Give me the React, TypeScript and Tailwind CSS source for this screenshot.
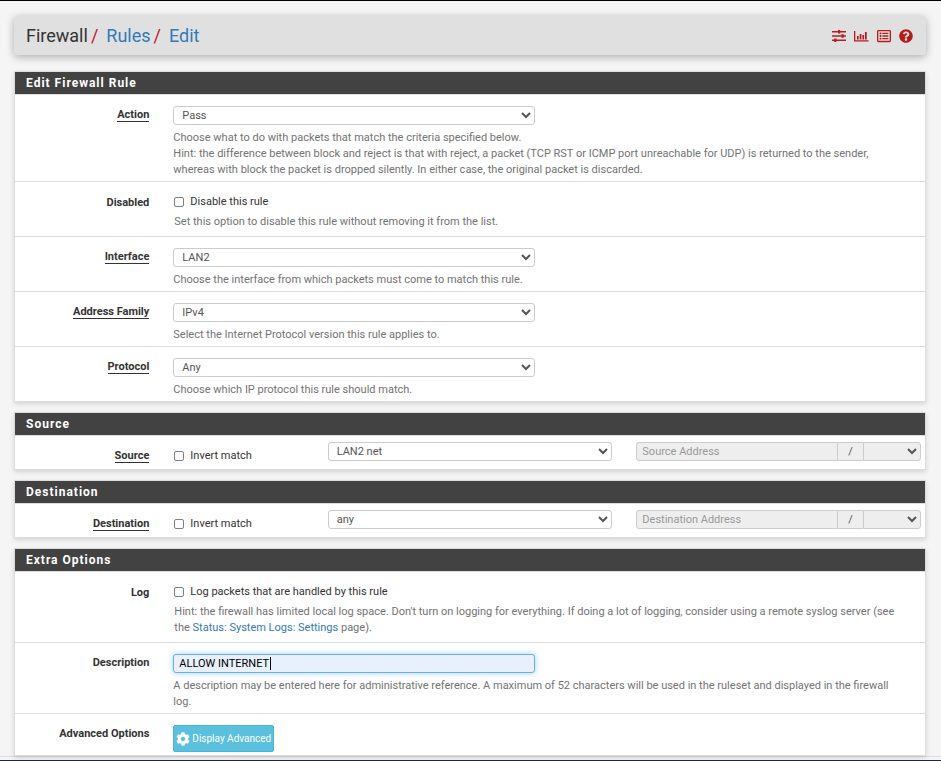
import type { ReactNode } from "react";
import { FaCog, FaQuestionCircle, FaRegListAlt } from "react-icons/fa";

const selectClass =
  "block h-[19px] w-full rounded-[3px] border border-[#ccc] bg-white px-1 text-[11px] text-[#555] disabled:bg-[#eee] disabled:opacity-100";

function Panel({ title, children }: { title: string; children: ReactNode }) {
  return (
    <section className="border border-[#ddd] bg-white shadow-[0_2px_5px_rgba(0,0,0,0.14)]">
      <h2 className="h-[23px] border-b border-[#ddd] bg-[#424242] pl-[11px] text-[12px] leading-[22px] font-bold tracking-[1px] text-white">
        {title}
      </h2>
      <div className="divide-y divide-[#ddd] overflow-x-clip">{children}</div>
    </section>
  );
}

function RowLabel({ id, underline, children }: { id: string; underline?: boolean; children: string }) {
  return (
    <div className="col-span-2 flex items-start justify-end px-3 pt-[2px] font-bold">
      <label htmlFor={id} className={underline ? "border-b border-[#333] leading-[13px]" : "leading-[13px]"}>
        {children}
      </label>
    </div>
  );
}

function SelectRow({ id, label, value, children }: { id: string; label: string; value: string; children: ReactNode }) {
  return (
    <div className="-mx-2 grid grid-cols-12 pt-[11px] pb-[3px]">
      <RowLabel id={id} underline>{label}</RowLabel>
      <div className="col-span-10 grid grid-cols-10">
        <div className="col-span-5 px-3">
          <select id={id} className={selectClass}>
            <option>{value}</option>
          </select>
        </div>
        <p className="col-span-10 mt-[5px] pr-7 pl-3 leading-4 text-[#737373]">{children}</p>
      </div>
    </div>
  );
}

function Check({ id, children }: { id: string; children: string }) {
  return (
    <label className="flex h-4 items-center gap-[6px] pl-px leading-4">
      <input id={id} type="checkbox" className="size-[10px] appearance-none rounded-[2px] border border-[#808080] bg-white" />
      {children}
    </label>
  );
}

function CheckRow({ id, label, text, children }: { id: string; label: string; text: string; children: ReactNode }) {
  return (
    <div className="-mx-2 grid grid-cols-12 pt-3 pb-[6px]">
      <RowLabel id={id}>{label}</RowLabel>
      <div className="col-span-10 pr-7 pl-3">
        <Check id={id}>{text}</Check>
        <p className="mt-1 pl-px leading-4 text-[#737373]">{children}</p>
      </div>
    </div>
  );
}

function AddressRow({ name, value }: { name: string; value: string }) {
  return (
    <div className="-mx-2 grid grid-cols-12 pt-[6px] pb-[5px]">
      <div className="col-span-2 pt-[5px]">
        <RowLabel id={name} underline>{name}</RowLabel>
      </div>
      <div className="col-span-2 px-3 pt-[6px]">
        <Check id={name}>Invert match</Check>
      </div>
      <div className="col-span-4 px-3">
        <select aria-label={name + " type"} className={selectClass}>
          <option>{value}</option>
        </select>
      </div>
      <div className="col-span-4 flex items-start px-3">
        <input
          disabled
          aria-label={name + " Address"}
          placeholder={name + " Address"}
          className="h-[19px] min-w-0 flex-1 rounded-l-[3px] border border-[#ccc] bg-[#eee] px-[5px] placeholder:text-[#999]"
        />
        <span className="h-[19px] w-[25px] border-y border-[#ccc] bg-[#eee] text-center leading-[17px] text-[#555]">/</span>
        <select
          disabled
          aria-label={name + " mask"}
          className="h-[19px] w-[58px] rounded-r-[3px] border border-[#ccc] bg-[#eee] px-1 text-[#555] disabled:opacity-100"
        >
          <option></option>
        </select>
      </div>
    </div>
  );
}

function SlidersIcon() {
  return (
    <svg viewBox="0 0 14 12" className="h-3 w-[14px]" fill="currentColor" aria-hidden="true">
      <path d="M0 1h14v1.600H0zM0 5.200h14v1.600H0zM0 9.500h14v1.600H0z" />
      <path d="M6 0h2.200v3.500H6zM9.500 4.300h2.200v3.500H9.500zM2.200 8.500h2.200V12H2.200z" />
    </svg>
  );
}

function ChartIcon() {
  return (
    <svg viewBox="0 0 15 12" className="h-3 w-[15px]" fill="currentColor" aria-hidden="true">
      <path d="M0 1h1.300v9.200h13.200v1.300H0zM3 6h1.700v3.500H3zM5.700 4h1.700v5.500H5.700zM8.400 5h1.700v4.500H8.400zM11 2h1.700v7.500H11z" />
    </svg>
  );
}

export default function App() {
  return (
    <div className="min-h-screen border-t border-black bg-[#f5f5f5] font-[Roboto,sans-serif] text-[11px] text-[#333]">
      <main className="pt-[15px] pr-[15px] pl-[14px]">
        <header className="flex h-[39px] items-center justify-between rounded-[4px] bg-[#e0e0e0] pr-[13px] pl-3 shadow-[0_2px_8px_rgba(0,0,0,0.3)]">
          <nav className="flex text-[18px] leading-6">
            <span>Firewall</span>
            <span className="pl-[3px] text-[#c4161c]">/</span>
            <a href="#rules" className="pl-2 text-[#337ab7]">Rules</a>
            <span className="pl-[3px] text-[#c4161c]">/</span>
            <a href="#edit" className="pl-2 text-[#337ab7]">Edit</a>
          </nav>
          <div className="flex items-center gap-2 text-[14px] text-[#b71c1c]">
            <a href="#advanced" aria-label="Settings"><SlidersIcon /></a>
            <a href="#status" aria-label="Status"><ChartIcon /></a>
            <a href="#logs" aria-label="Logs"><FaRegListAlt /></a>
            <a href="#help" aria-label="Help"><FaQuestionCircle /></a>
          </div>
        </header>

        <form className="mt-4 flex flex-col gap-[10px]">
          <Panel title="Edit Firewall Rule">
            <SelectRow id="action" label="Action" value="Pass">
              Choose what to do with packets that match the criteria specified below.
              <br />
              Hint: the difference between block and reject is that with reject, a packet (TCP RST or ICMP port unreachable for UDP) is returned to the sender, whereas with block the packet is dropped silently. In either case, the original packet is discarded.
            </SelectRow>
            <CheckRow id="disabled" label="Disabled" text="Disable this rule">
              Set this option to disable this rule without removing it from the list.
            </CheckRow>
            <SelectRow id="interface" label="Interface" value="LAN2">
              Choose the interface from which packets must come to match this rule.
            </SelectRow>
            <SelectRow id="family" label="Address Family" value="IPv4">
              Select the Internet Protocol version this rule applies to.
            </SelectRow>
            <SelectRow id="protocol" label="Protocol" value="Any">
              Choose which IP protocol this rule should match.
            </SelectRow>
          </Panel>

          <Panel title="Source">
            <AddressRow name="Source" value="LAN2 net" />
          </Panel>

          <Panel title="Destination">
            <AddressRow name="Destination" value="any" />
          </Panel>

          <Panel title="Extra Options">
            <CheckRow id="log" label="Log" text="Log packets that are handled by this rule">
              Hint: the firewall has limited local log space. Don't turn on logging for everything. If doing a lot of logging, consider using a remote syslog server (see the <a href="#settings" className="text-[#337ab7]">Status: System Logs: Settings</a> page).
            </CheckRow>
            <div className="-mx-2 grid grid-cols-12 pt-[11px] pb-[3px]">
              <RowLabel id="description">Description</RowLabel>
              <div className="col-span-10 grid grid-cols-10">
                <div className="relative col-span-5 px-3">
                  <input
                    id="description"
                    defaultValue="ALLOW INTERNET"
                    className="block h-[19px] w-full rounded-[3px] border border-[#66afe9] bg-[#e8f0fe] px-[5px] text-black caret-transparent shadow-[0_0_6px_rgba(102,175,233,0.6)] outline-none"
                  />
                  <span className="absolute top-[3px] left-[109px] h-[13px] w-px bg-black" />
                </div>
                <p className="col-span-10 mt-[5px] pr-7 pl-3 leading-4 text-[#737373]">
                  A description may be entered here for administrative reference. A maximum of 52 characters will be used in the ruleset and displayed in the firewall log.
                </p>
              </div>
            </div>
            <div className="-mx-2 grid grid-cols-12 pt-[11px] pb-[3px]">
              <RowLabel id="advanced">Advanced Options</RowLabel>
              <div className="col-span-10 px-3">
                <button id="advanced" type="button" className="flex h-[27px] items-center gap-[2px] rounded-[2px] border border-[#46b8da] bg-[#5bc0de] px-[2px] text-[10px] text-white">
                  <FaCog className="size-[14px]" />
                  Display Advanced
                </button>
              </div>
            </div>
          </Panel>
        </form>
      </main>
      <footer className="h-[5px] border-t border-b border-t-[#ddd] border-b-[#1b2a41]" />
    </div>
  );
}
